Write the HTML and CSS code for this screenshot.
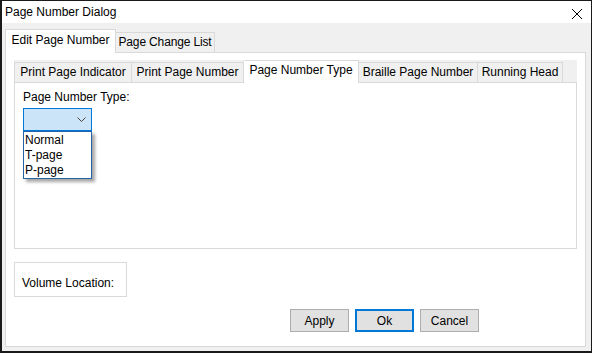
FILE: index.html
```html
<!DOCTYPE html>
<html lang="en">
<head>
  <meta charset="UTF-8" />
  <meta name="viewport" content="width=device-width, initial-scale=1.0" />
  <title>Page Number Dialog</title>
  <link rel="stylesheet" href="styles.css">
</head>
<body>

  <div class="window">

    <div class="titlebar">
      <span class="title">Page Number Dialog</span>
      <svg class="close" width="10" height="10" viewBox="0 0 10 10">
        <path d="M0 0 L10 10 M10 0 L0 10" stroke="#000" stroke-width="1" fill="none" />
      </svg>
    </div>

    <div class="tabstrip outer-strip">
      <div class="tab selected tab-edit">Edit Page Number</div>
      <div class="tab tab-changes">Page Change List</div>
    </div>

    <div class="tabpage outer-page">

      <div class="inner-tabs">
        <div class="tabstrip inner-strip">
          <div class="tab tab-indicator">Print Page Indicator</div>
          <div class="tab tab-print">Print Page Number</div>
          <div class="tab selected tab-type">Page Number Type</div>
          <div class="tab tab-braille">Braille Page Number</div>
          <div class="tab tab-head">Running Head</div>
        </div>

        <div class="tabpage inner-page">
          <div class="field-label">Page Number Type:</div>
          <div class="combo">
            <div class="combo-box">
              <svg class="chevron" width="9" height="5" viewBox="0 0 9 5">
                <path d="M0.5 0.5 L4.5 4.5 L8.5 0.5" stroke="#444" stroke-width="1" fill="none" />
              </svg>
            </div>
            <ul class="combo-list">
              <li>Normal</li>
              <li>T-page</li>
              <li>P-page</li>
            </ul>
          </div>
        </div>
      </div>

      <div class="volume">Volume Location:</div>

      <div class="buttons">
        <button class="btn">Apply</button>
        <button class="btn default">Ok</button>
        <button class="btn">Cancel</button>
      </div>

    </div>

  </div>

</body>
</html>
```

FILE: styles.css
```css
:root {
  --face: #f0f0f0;
  --line: #d9d9d9;
  --accent: #0078d7;
}

body {
  margin: 0;
  background: #fff;
  font-family: 'Liberation Sans', Arial, sans-serif;
  font-size: 12px;
  color: #000;
}

.window {
  width: 592px;
  height: 353px;
  box-sizing: border-box;
  border: 1px solid #1a1a1a;
  border-left-width: 2px;
  border-bottom-width: 2px;
  background: var(--face);
  display: flex;
  flex-direction: column;
}

.titlebar {
  height: 22px;
  background: #fff;
  display: flex;
  align-items: center;
  justify-content: space-between;
  padding: 0 9px 0 3px;
  flex-shrink: 0;
}

.close {
  margin-top: 3px;
}

/* tab strips */

.tabstrip {
  display: flex;
  align-items: flex-end;
  flex-shrink: 0;
}

.outer-strip {
  height: 29px;
  padding-left: 3px;
}

.tab {
  height: 20px;
  line-height: 19px;
  padding: 0;
  box-sizing: border-box;
  border: 1px solid var(--line);
  border-bottom: none;
  background: var(--face);
  white-space: nowrap;
  text-align: center;
}

.tab + .tab {
  border-left: none;
}

.tab.selected {
  height: 24px;
  line-height: 20px;
  background: #fff;
  margin-bottom: -1px;
  position: relative;
  z-index: 1;
}

.tab-edit { width: 111px; }
.tab-changes { width: 99px; letter-spacing: -0.15px; }
.tab-indicator { width: 118px; }
.tab-print { width: 112px; }
.tab-type { width: 115px; }
.tab-braille { width: 119px; }
.tab-head { width: 85px; }

.tabpage {
  background: #fff;
  border: 1px solid var(--line);
  box-sizing: border-box;
}

.outer-page {
  height: 295px;
  margin: 0 5px 0 3px;
  padding: 7px 0 0 8px;
  display: flex;
  flex-direction: column;
}

.inner-tabs {
  width: 563px;
}

.inner-strip {
  height: 22px;
  background: var(--face);
}

.inner-strip .tab.selected {
  height: 23px;
  line-height: 19px;
}

.inner-page {
  height: 167px;
  padding: 7px 0 0 8px;
}

/* combo box with its list open */

.field-label {
  line-height: 15px;
}

.combo {
  position: relative;
  width: 69px;
  margin-top: 3px;
}

.combo-box {
  height: 23px;
  box-sizing: border-box;
  border: 1px solid var(--accent);
  background: #cce4f7;
  display: flex;
  align-items: center;
  justify-content: flex-end;
  padding-right: 5px;
}

.combo-list {
  position: absolute;
  top: 23px;
  left: 0;
  width: 69px;
  box-sizing: border-box;
  margin: 0;
  padding: 1px 0 0 1px;
  list-style: none;
  background: #fff;
  border: 1px solid #2364a8;
  box-shadow: 3px 3px 3px rgba(0, 0, 0, 0.35);
  z-index: 5;
}

.combo-list li {
  line-height: 15px;
}

/* bottom part */

.volume {
  width: 113px;
  height: 35px;
  box-sizing: border-box;
  margin-top: 13px;
  border: 1px solid var(--line);
  padding: 13px 0 0 7px;
  line-height: 15px;
}

.buttons {
  display: flex;
  gap: 6px;
  margin-top: 12px;
  padding-left: 276px;
}

.btn {
  width: 59px;
  height: 23px;
  box-sizing: border-box;
  border: 1px solid #adadad;
  background: #e1e1e1;
  font-family: inherit;
  font-size: 12px;
  color: #000;
  padding: 0;
}

.btn.default {
  border: 2px solid var(--accent);
}
```
